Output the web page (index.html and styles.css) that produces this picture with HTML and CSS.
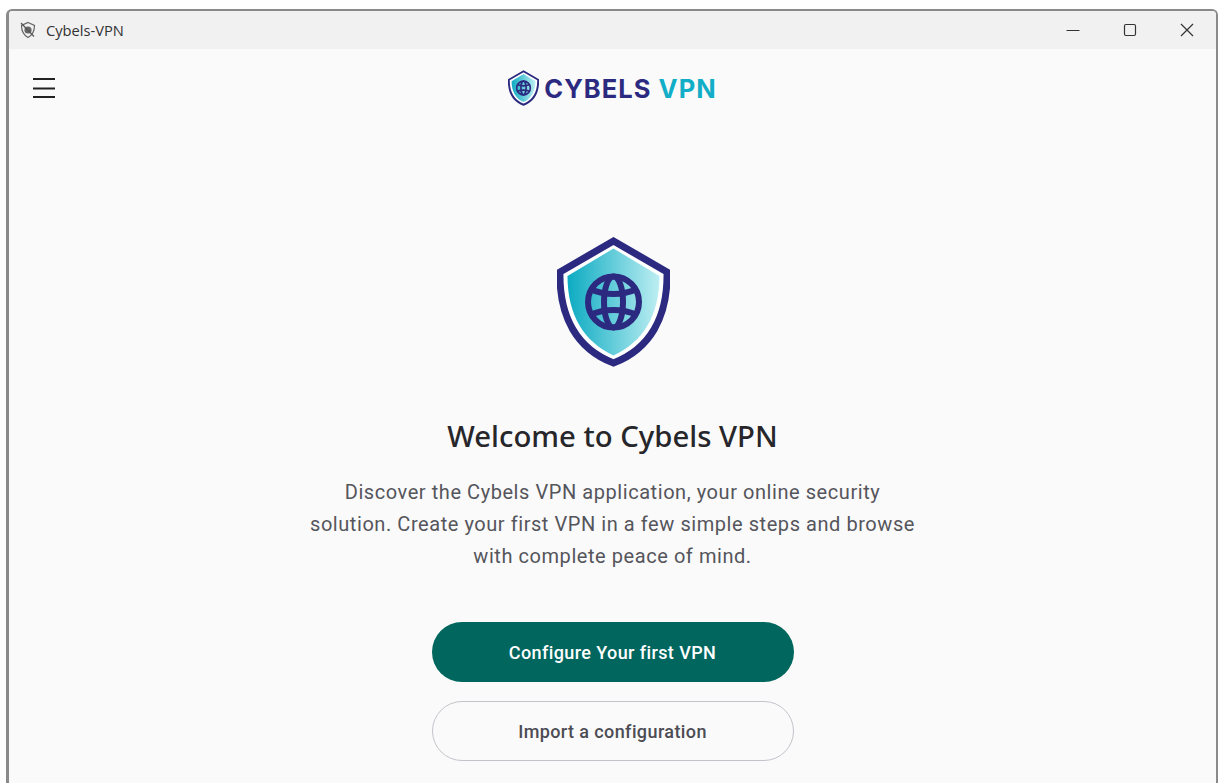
FILE: index.html
```html
<!DOCTYPE html>
<html lang="en">
<head>
<meta charset="utf-8">
<title>Cybels-VPN</title>
<link rel="stylesheet" href="styles.css">
</head>
<body>
<div class="window">
  <header class="titlebar">
    <div class="title-left">
      <svg class="app-icon" viewBox="0 0 18 18" width="18" height="18" aria-hidden="true">
        <path d="M9 1.500 15.500 4.500C15.500 10 13.500 14 9 16.500 4.500 14 2.500 10 2.500 4.500Z" fill="none" stroke="#666" stroke-width="1.200"/>
        <circle cx="9" cy="9" r="3.600" fill="#666"/>
        <path d="M2 2 15 15.500" stroke="#555" stroke-width="1.200"/>
      </svg>
      <span class="app-name">Cybels-VPN</span>
    </div>
    <div class="win-controls">
      <svg viewBox="0 0 14 14" width="14" height="14" aria-hidden="true"><path d="M0.500 7.500H13.500" stroke="#333" stroke-width="1.100"/></svg>
      <svg viewBox="0 0 14 14" width="14" height="14" aria-hidden="true"><rect x="1.500" y="1.500" width="11" height="11" rx="1.500" fill="none" stroke="#333" stroke-width="1.200"/></svg>
      <svg viewBox="0 0 14 14" width="14" height="14" aria-hidden="true"><path d="M1 1 13 13M13 1 1 13" stroke="#333" stroke-width="1.200"/></svg>
    </div>
  </header>
  <div class="app">
    <div class="topbar">
      <button class="menu-btn" aria-label="Menu">
        <svg viewBox="0 0 22 20" width="22" height="20" aria-hidden="true"><path d="M0 1H22M0 10.500H22M0 19H22" stroke="#222" stroke-width="2"/></svg>
      </button>
      <div class="brand">
        <svg class="brand-mark" viewBox="0 0 113 130" width="31" height="36" aria-hidden="true">
          <defs>
            <linearGradient id="markFill" x1="0" x2="1" y1="0" y2="0">
              <stop offset="0" stop-color="#0cabc2"/>
              <stop offset="1" stop-color="#bdeef2"/>
            </linearGradient>
          </defs>
          <path d="M56.500 4 110 35C111 80 93 112 56.500 126 20 112 2 80 3 35Z" fill="#fff" stroke="#2b2a80" stroke-width="7"/>
          <path d="M56.500 14 100 40C100 78 84 104 56.500 116 29 104 13 78 13 40Z" fill="url(#markFill)"/>
          <g transform="translate(56.500 65)" fill="none" stroke="#2b2a80" stroke-width="6">
            <circle r="25"/>
            <ellipse rx="9.500" ry="25"/>
            <path d="M-24 -13Q0 -3 24 -13M-24 13Q0 3 24 13"/>
          </g>
        </svg>
        <span class="brand-name">CYBELS <span class="brand-accent">VPN</span></span>
      </div>
    </div>
    <main class="welcome">
      <svg class="shield" viewBox="0 0 113 130" width="113" height="130" aria-hidden="true">
        <defs>
          <linearGradient id="shieldFill" x1="0" x2="1" y1="0" y2="0">
            <stop offset="0" stop-color="#0cabc2"/>
            <stop offset="1" stop-color="#bdeef2"/>
          </linearGradient>
        </defs>
        <path d="M56.500 4 110 35C111 80 93 112 56.500 126 20 112 2 80 3 35Z" fill="#fff" stroke="#2b2a80" stroke-width="7"/>
        <path d="M56.500 11.500 102.500 39C102.500 78 86 105 56.500 118.500 27 105 10.500 78 10.500 39Z" fill="url(#shieldFill)"/>
        <g transform="translate(56.500 65)" fill="none" stroke="#2b2a80" stroke-width="6">
          <circle r="25.500"/>
          <ellipse rx="9.500" ry="25.500"/>
          <path d="M-24 -13Q0 -3 24 -13M-24 13Q0 3 24 13"/>
        </g>
      </svg>
      <h1 class="heading">Welcome to Cybels VPN</h1>
      <p class="intro">Discover the Cybels VPN application, your online security solution. Create your first VPN in a few simple steps and browse with complete peace of mind.</p>
      <button class="btn btn-primary">Configure Your first VPN</button>
      <button class="btn btn-outline">Import a configuration</button>
    </main>
  </div>
</div>
</body>
</html>
```
FILE: styles.css
```css
html, body {
  margin: 0;
  height: 100%;
  overflow: hidden;
  background: #fff;
}

body {
  padding: 9px 4px 0 6px;
  box-sizing: border-box;
}

.window {
  height: 100%;
  box-sizing: border-box;
  border: solid #8a8a8a;
  border-width: 2px 2px 0 3px;
  border-radius: 6px 6px 0 0;
  background: #fafafa;
  display: flex;
  flex-direction: column;
  overflow: hidden;
}

.titlebar {
  height: 38px;
  flex: none;
  background: #f1f1f1;
  display: flex;
  align-items: center;
  justify-content: space-between;
  padding: 0 22px 0 10px;
}

.title-left {
  display: flex;
  align-items: center;
  gap: 9px;
}

.app-name {
  font: 14.700px "Open Sans", "Liberation Sans", sans-serif;
  color: #333;
}

.win-controls {
  display: flex;
  align-items: center;
  gap: 43px;
}

.app {
  flex: 1;
  display: flex;
  flex-direction: column;
  min-height: 0;
}

.topbar {
  height: 80px;
  flex: none;
  position: relative;
  display: flex;
  align-items: center;
  justify-content: center;
}

.menu-btn {
  position: absolute;
  left: 24px;
  top: 29px;
  padding: 0;
  border: 0;
  background: none;
  display: flex;
}

.brand {
  display: flex;
  align-items: center;
  gap: 5px;
  padding-bottom: 2px;
}

.brand-name {
  font: 700 25.500px "Inter", "Liberation Sans", sans-serif;
  letter-spacing: 1.05px;
  color: #2b2a80;
}

.brand-accent {
  color: #12adc6;
}

.welcome {
  display: flex;
  flex-direction: column;
  align-items: center;
  padding-top: 108px;
}

.shield {
  display: block;
  margin-left: 2px;
}

.heading {
  margin: 49px 0 0;
  font: 500 29.300px/40px "Noto Sans", "Open Sans", sans-serif;
  color: #26262b;
}

.intro {
  width: 610px;
  margin: 20px 0 0;
  text-align: center;
  font: 400 20px/32px "Roboto", sans-serif;
  letter-spacing: 0.56px;
  color: #55555c;
}

.btn {
  width: 362px;
  height: 60px;
  border-radius: 30px;
  box-sizing: border-box;
  font: 500 18px "Roboto", sans-serif;
  letter-spacing: 0.4px;
  flex: none;
}

.btn-primary {
  margin-top: 50px;
  background: #00665e;
  color: #fff;
  border: 0;
}

.btn-outline {
  margin-top: 19px;
  background: transparent;
  color: #4c4c54;
  border: 1.500px solid #c5c3ca;
}
```
